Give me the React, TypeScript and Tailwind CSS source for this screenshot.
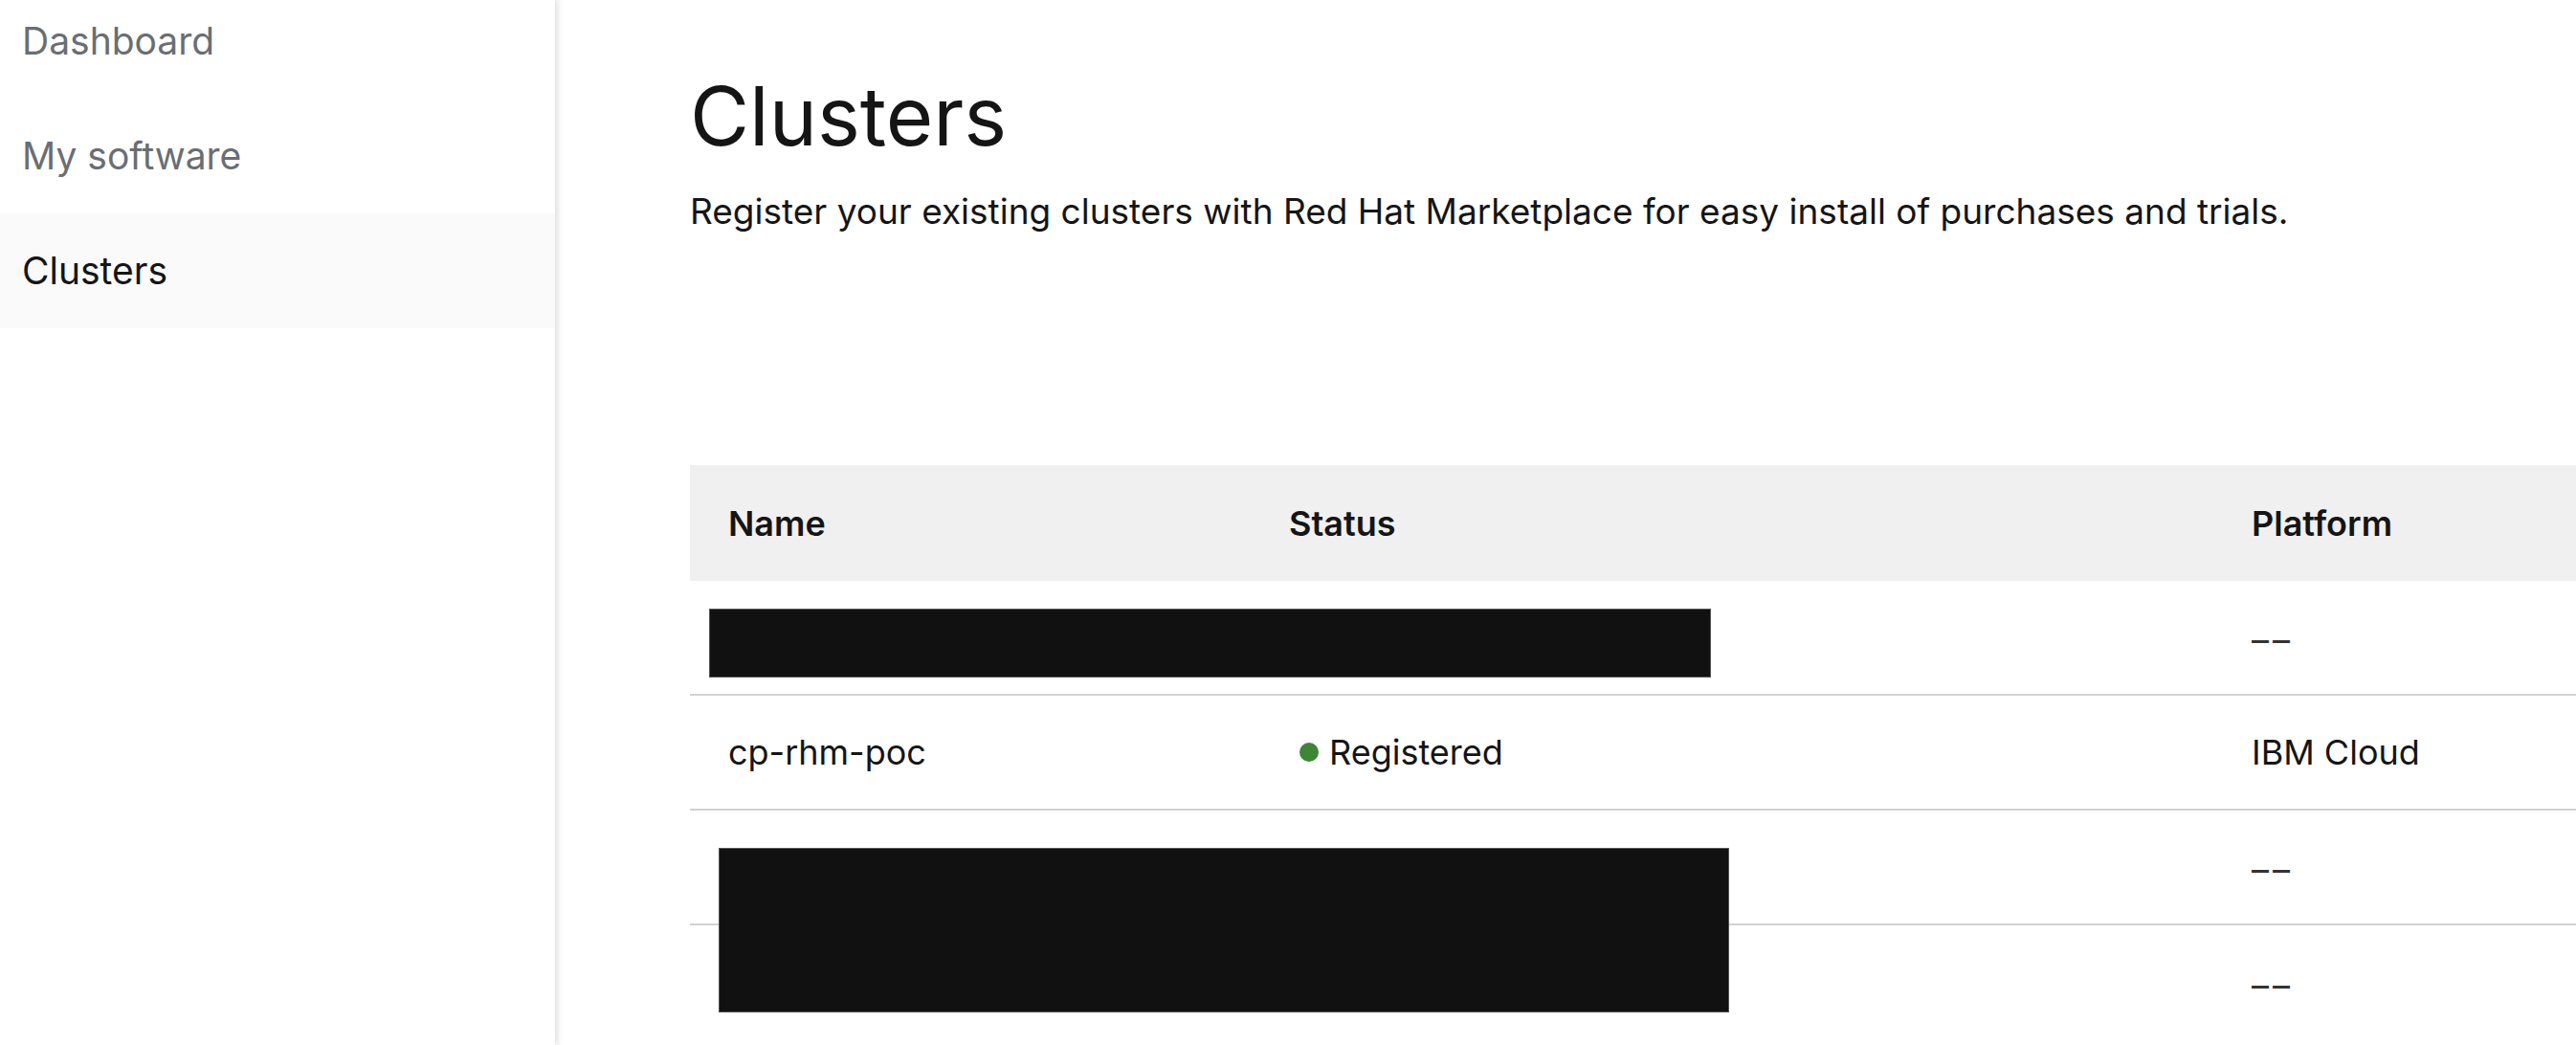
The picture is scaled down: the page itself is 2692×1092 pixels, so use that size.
import { ReactNode } from "react";

type Cluster = { name: string | null; status: string | null; platform: string | null };

const NAV = [
  { key: "dashboard", label: "Dashboard" },
  { key: "software", label: "My software" },
  { key: "clusters", label: "Clusters" },
];

const CLUSTERS: Cluster[] = [
  { name: null, status: null, platform: null },
  { name: "cp-rhm-poc", status: "Registered", platform: "IBM Cloud" },
  { name: null, status: null, platform: null },
  { name: null, status: null, platform: null },
];

function Cell({ children, className = "" }: { children?: ReactNode; className?: string }) {
  return <div className={`flex items-center pl-[40px] ${className}`}>{children}</div>;
}

export default function App() {
  const active = "clusters";

  return (
    <div className="flex h-[1092px] w-[2692px] overflow-hidden bg-white text-[#151515] font-['Inter',sans-serif]">
      <aside className="relative z-10 w-[580px] shrink-0 bg-white shadow-[3px_0_6px_rgba(0,0,0,0.12)]">
        <nav className="-mt-[17px]">
          {NAV.map((n) => (
            <div
              key={n.key}
              className={`flex h-[120px] items-center pl-[23px] text-[39px] ${active === n.key ? "bg-[#fafafa] text-[#151515]" : "text-[#6a6e73]"}`}
            >
              {n.label}
            </div>
          ))}
        </nav>
      </aside>

      <main className="min-w-0 flex-1 pl-[141px] pt-[79px]">
        <h1 className="text-[85px] leading-none">Clusters</h1>
        <p className="mt-[35px] text-[37px] leading-[44px]">
          Register your existing clusters with Red Hat Marketplace for easy install of purchases and trials.
        </p>

        <div className="relative mt-[243px] w-[2400px]">
          <div className="grid h-[121px] grid-cols-[586px_1006px_1fr] bg-[#f0f0f0] text-[36px] font-semibold">
            <Cell>Name</Cell>
            <Cell>Status</Cell>
            <Cell>Platform</Cell>
          </div>

          {CLUSTERS.map((c, i) => (
            <div
              key={i}
              className={`grid h-[120px] grid-cols-[586px_1006px_1fr] text-[36px] ${i < CLUSTERS.length - 1 ? "border-b-2 border-[#d2d2d2]" : ""}`}
            >
              <Cell>{c.name}</Cell>
              <Cell>
                {c.status && (
                  <span className="ml-[11px] flex items-center gap-[11px]">
                    <span className="h-[20px] w-[20px] rounded-full bg-[#3e8635]" />
                    {c.status}
                  </span>
                )}
              </Cell>
              <Cell>{c.platform || <span className="pt-[6px] tracking-[4px] text-[#333]">––</span>}</Cell>
            </div>
          ))}

          {/* redactions */}
          <div className="absolute left-[20px] top-[150px] h-[72px] w-[1047px] border border-[#555] bg-[#111]" />
          <div className="absolute left-[30px] top-[400px] h-[172px] w-[1056px] border border-[#555] bg-[#111]" />
        </div>
      </main>
    </div>
  );
}
